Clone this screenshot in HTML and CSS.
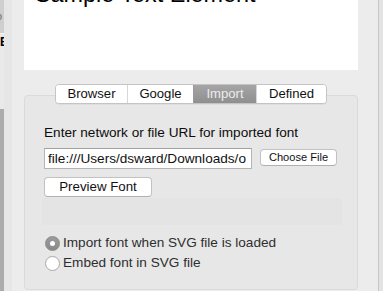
FILE: index.html
```html
<!DOCTYPE html>
<html>
<head>
<meta charset="utf-8">
<link rel="stylesheet" href="styles.css">
</head>
<body>
<div class="window">
  <div class="side">
    <div class="side-col">
      <div class="seg seg-top"><span class="frag-o">o</span></div>
      <div class="seg seg-mid"><span class="frag-e">E</span></div>
      <div class="seg seg-low"></div>
    </div>
    <div class="side-fill"></div>
  </div>
  <div class="main">
    <div class="preview">
      <div class="sample">Sample Text Element</div>
    </div>
    <div class="tabs">
      <div class="tab t-browser">Browser</div>
      <div class="tab t-google">Google</div>
      <div class="tab t-import active">Import</div>
      <div class="tab t-defined">Defined</div>
    </div>
    <div class="group">
      <div class="label">Enter network or file URL for imported font</div>
      <div class="url-row">
        <div class="url-field"><span class="url-text">file:///Users/dsward/Downloads/o</span></div>
        <div class="btn btn-choose">Choose File</div>
      </div>
      <div class="btn btn-preview">Preview Font</div>
      <div class="blank"></div>
      <div class="radios">
        <div class="radio-row"><span class="radio on"><span class="dot"></span></span><span class="radio-text">Import font when SVG file is loaded</span></div>
        <div class="radio-row"><span class="radio"></span><span class="radio-text">Embed font in SVG file</span></div>
      </div>
    </div>
  </div>
  <div class="edge">
    <div class="edge-line"></div>
    <div class="edge-fill"></div>
  </div>
</div>
</body>
</html>
```

FILE: styles.css
```css
html, body {
  margin: 0;
  padding: 0;
}
body {
  width: 383px;
  height: 291px;
  overflow: hidden;
  background: #ececec;
  font-family: "Liberation Sans", Arial, sans-serif;
  color: #111;
}
.window {
  display: flex;
  height: 291px;
}
.side {
  display: flex;
  width: 12px;
  flex: none;
}
.side-col {
  width: 4px;
  overflow: hidden;
  display: flex;
  flex-direction: column;
}
.seg {
  overflow: hidden;
}
.seg-top {
  height: 33px;
  background: #cfcfcf;
}
.seg-mid {
  height: 75px;
  background: #e9e9e9;
  border-top: 1px solid #f4f4f4;
}
.seg-low {
  flex: 1;
  background: #acacac;
}
.frag-o {
  display: block;
  font-size: 11px;
  line-height: 12px;
  margin-top: 10px;
  margin-left: -4px;
  color: #7a6a60;
}
.frag-e {
  display: block;
  font-size: 12px;
  font-weight: bold;
  line-height: 12px;
  margin-top: 2px;
  color: #000;
}
.side-fill {
  width: 8px;
  background: #e6e6e6;
}
.main {
  flex: 1;
  display: flex;
  flex-direction: column;
  align-items: flex-start;
  padding-left: 12px;
  padding-right: 20px;
}
.preview {
  width: 334px;
  height: 70px;
  background: #ffffff;
  overflow: hidden;
}
.sample {
  font-size: 23.4px;
  line-height: 24px;
  margin-top: -18px;
  margin-left: 11px;
  color: #000;
  white-space: nowrap;
}
.tabs {
  position: relative;
  z-index: 1;
  display: flex;
  margin-top: 14px;
  margin-left: 31px;
  height: 20px;
  box-sizing: border-box;
  border: 1px solid #c4c4c4;
  border-radius: 4px;
  overflow: hidden;
  background: #fff;
  box-shadow: 0 0.5px 0.5px rgba(0,0,0,0.08);
}
.tab {
  box-sizing: border-box;
  height: 18px;
  line-height: 18px;
  font-size: 13.1px;
  text-align: center;
  color: #111;
  border-left: 1px solid #d6d6d6;
  background: #fff;
}
.t-browser { width: 71px; border-left: none; }
.t-google { width: 66px; }
.t-import { width: 63px; }
.t-defined { width: 70px; }
.tab.active {
  background: linear-gradient(#a5a5a5, #8f8f8f);
  color: #ececec;
  border-left-color: #9a9a9a;
}
.group {
  margin-top: -9px;
  width: 334px;
  height: 195px;
  box-sizing: border-box;
  background: #e7e7e7;
  border: 1px solid #dadada;
  border-radius: 4px;
  padding: 28px 0 0 19px;
  display: flex;
  flex-direction: column;
  align-items: flex-start;
}
.label {
  font-size: 13.6px;
  line-height: 17px;
  color: #0d0d0d;
  white-space: nowrap;
}
.url-row {
  display: flex;
  align-items: flex-start;
  gap: 8px;
  margin-top: 7px;
}
.url-field {
  width: 208px;
  height: 21px;
  box-sizing: border-box;
  background: #fff;
  border: 1px solid #b4b4b4;
  border-top-color: #a2a2a2;
  padding-left: 3px;
  overflow: hidden;
}
.url-text {
  display: block;
  width: 203px;
  overflow: hidden;
  font-size: 13.6px;
  line-height: 19px;
  white-space: nowrap;
  color: #111;
}
.btn {
  box-sizing: border-box;
  background: #fff;
  border: 1px solid #c2c2c2;
  border-bottom-color: #b0b0b0;
  border-radius: 4px;
  text-align: center;
  color: #111;
  white-space: nowrap;
}
.btn-choose {
  width: 77px;
  height: 17px;
  margin-top: 1px;
  font-size: 11.1px;
  line-height: 15px;
}
.btn-preview {
  width: 108px;
  height: 20px;
  margin-top: 8px;
  font-size: 13.3px;
  line-height: 18px;
}
.blank {
  width: 300px;
  height: 27px;
  margin-left: -2px;
  margin-top: 1px;
  background: #e4e4e4;
  border-radius: 2px;
}
.radios {
  margin-top: 8px;
  display: flex;
  flex-direction: column;
}
.radio-row {
  display: flex;
  align-items: center;
  height: 20px;
}
.radio {
  width: 15px;
  height: 15px;
  box-sizing: border-box;
  border-radius: 50%;
  background: #fff;
  border: 1px solid #a8a8a8;
  margin-left: 1px;
  display: flex;
  align-items: center;
  justify-content: center;
  flex: none;
}
.radio.on {
  background: linear-gradient(#9c9c9c, #888888);
  border-color: #8a8a8a;
}
.dot {
  width: 5px;
  height: 5px;
  border-radius: 50%;
  background: #fff;
}
.radio-text {
  font-size: 13.6px;
  line-height: 20px;
  margin-left: 3px;
  color: #2e2e2e;
  white-space: nowrap;
}
.edge {
  display: flex;
  width: 5px;
  flex: none;
}
.edge-line {
  width: 1px;
  background: #c6c6c6;
}
.edge-fill {
  flex: 1;
  background: #e3e3e3;
}
```
